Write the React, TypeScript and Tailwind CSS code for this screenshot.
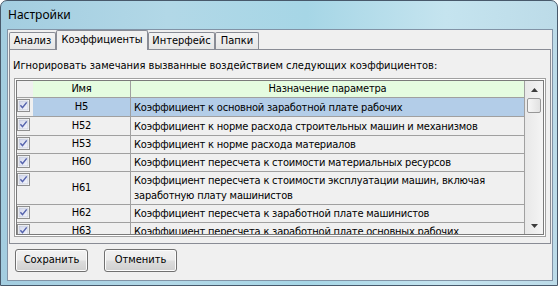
import React from "react";

const F = { fontFamily: '"DejaVu Sans Condensed", "DejaVu Sans", sans-serif', fontStretch: "condensed" as const };

function Check() {
  return (
    <svg width="13" height="13" viewBox="0 0 13 13" className="block">
      <defs>
        <linearGradient id="cbg" x1="0" y1="0" x2="1" y2="1">
          <stop offset="0" stopColor="#d3d8ec" />
          <stop offset="1" stopColor="#f4f5fb" />
        </linearGradient>
      </defs>
      <rect x="0.5" y="0.5" width="12" height="12" fill="#ffffff" stroke="#8f8f8f" />
      <rect x="2" y="2" width="9" height="9" fill="url(#cbg)" stroke="#b6bccb" strokeWidth="0.6" />
      <path d="M3.4 6.3 L5.5 8.7 L9.7 3.4" fill="none" stroke="#5563ad" strokeWidth="1.5" />
    </svg>
  );
}

type Row = { name: string; text: React.ReactNode; h: number; sel?: boolean };

const rows: Row[] = [
  { name: "H5", text: "Коэффициент к основной заработной плате рабочих", h: 19, sel: true },
  { name: "H52", text: "Коэффициент к норме расхода строительных машин и механизмов", h: 19 },
  { name: "H53", text: "Коэффициент к норме расхода материалов", h: 18 },
  { name: "H60", text: "Коэффициент пересчета к стоимости материальных ресурсов", h: 18 },
  {
    name: "H61",
    text: (
      <>
        Коэффициент пересчета к стоимости эксплуатации машин, включая
        <br />
        заработную плату машинистов
      </>
    ),
    h: 33,
  },
  { name: "H62", text: "Коэффициент пересчета к заработной плате машинистов", h: 18 },
  { name: "H63", text: "Коэффициент пересчета к заработной плате основных рабочих", h: 18 },
];

function Tab({ label, w, sel }: { label: string; w: number; sel?: boolean }) {
  if (sel) {
    return (
      <div
        className="relative z-10 -mb-[1px] h-[20px] border border-b-0 border-[#898c95] rounded-t-[2px] bg-[#f0f0f0] flex items-center justify-center text-[11px] text-black"
        style={{ width: w }}
      >
        {label}
      </div>
    );
  }
  return (
    <div
      className="h-[17px] border border-b-0 border-[#898c95] rounded-t-[2px] bg-[linear-gradient(#f3f3f3,#e6e6e6)] flex items-center justify-center text-[11px] text-black"
      style={{ width: w }}
    >
      {label}
    </div>
  );
}

function Button({ label }: { label: string }) {
  return (
    <div className="w-[73px] h-[23px] rounded-[3px] border border-[#707070] bg-[linear-gradient(#f2f2f2_0%,#ebebeb_49%,#dddddd_51%,#cfcfcf_100%)] shadow-[inset_0_0_0_1px_#fcfcfc] flex items-center justify-center text-[11px] text-black">
      {label}
    </div>
  );
}

export default function App() {
  return (
    <div
      className="w-[558px] h-[286px] overflow-hidden rounded-t-[7px] border border-[#48596b] bg-[linear-gradient(90deg,#a3cde0_0%,#b2d8e7_30%,#a6d6e6_55%,#c5e4ef_80%,#bcdbe8_100%)] flex flex-col pl-[6px] pr-[4px] pb-[4px]"
      style={F}
    >
      <div
        className="h-[28px] flex items-center pl-[1px] text-[12px] text-black"
        style={{ fontFamily: '"Noto Sans", "Open Sans", sans-serif' }}
      >
        Настройки
      </div>
      <div className="flex-1 bg-[#f0f0f0] border border-[#8293a6] flex flex-col">
        <div className="h-[19px] flex items-end pl-[1px]">
          <Tab label="Анализ" w={47} />
          <Tab label="Коэффициенты" w={92} sel />
          <Tab label="Интерфейс" w={67} />
          <Tab label="Папки" w={44} />
        </div>
        <div className="ml-[1px] w-[542px] h-[195px] border border-[#898c95] bg-[#f0f0f0] pl-[4px] pt-[9px]">
          <div className="-ml-[1px] text-[11px] leading-[14px] text-black">
            Игнорировать замечания вызванные воздействием следующих коэффициентов:
          </div>
          <div className="mt-[5px] w-[532px] h-[159px] border border-[#a0a0a0] bg-[#ffffff] p-[1px]">
            <div className="h-full border border-[#7a7a7a] bg-[#f0f0f0] flex overflow-hidden">
              <div className="w-[508px] flex flex-col overflow-hidden tracking-[-0.2px]">
                <div className="flex h-[17px] shrink-0 border-b border-[#a0a0a0]">
                  <div className="w-[16px] shrink-0" />
                  <div className="w-[98px] shrink-0 bg-[#e5fce0] border-r border-[#a0a0a0] flex items-center justify-center text-[11px]">
                    Имя
                  </div>
                  <div className="flex-1 bg-[#e5fce0] border-r border-[#a0a0a0] flex items-center justify-center text-[11px]">
                    Назначение параметра
                  </div>
                </div>
                {rows.map((r) => (
                  <div
                    key={r.name}
                    className="flex shrink-0 border-b border-[#a0a0a0]"
                    style={{ height: r.h }}
                  >
                    <div className="w-[16px] shrink-0 pt-[1px]">
                      <Check />
                    </div>
                    <div
                      className={
                        "w-[98px] shrink-0 border-r border-[#a0a0a0] flex items-center justify-center text-[11px] " +
                        (r.sel ? "bg-[#b3cde8]" : "")
                      }
                    >
                      {r.name}
                    </div>
                    <div
                      className={
                        "flex-1 border-r border-[#a0a0a0] flex items-center pl-[3px] text-[11px] leading-[15px] " +
                        (r.sel ? "bg-[#b3cde8]" : "")
                      }
                    >
                      <span>{r.text}</span>
                    </div>
                  </div>
                ))}
              </div>
              <div className="w-[18px] shrink-0 bg-[linear-gradient(90deg,#e8e8e8,#f4f4f4)] flex flex-col items-center">
                <div className="h-[17px] w-full flex items-center justify-center">
                  <svg width="7" height="4" viewBox="0 0 7 4">
                    <path d="M0 4 L3.5 0 L7 4 Z" fill="#3c3c3c" />
                  </svg>
                </div>
                <div className="w-[14px] h-[15px] rounded-[2px] border border-[#979797] bg-[linear-gradient(90deg,#f6f6f6,#e2e2e2)]" />
                <div className="flex-1" />
                <div className="h-[17px] w-full flex items-center justify-center">
                  <svg width="7" height="4" viewBox="0 0 7 4">
                    <path d="M0 0 L3.5 4 L7 0 Z" fill="#3c3c3c" />
                  </svg>
                </div>
              </div>
            </div>
          </div>
        </div>
        <div className="flex gap-[16px] pl-[7px] mt-[5px]">
          <Button label="Сохранить" />
          <Button label="Отменить" />
        </div>
      </div>
    </div>
  );
}
